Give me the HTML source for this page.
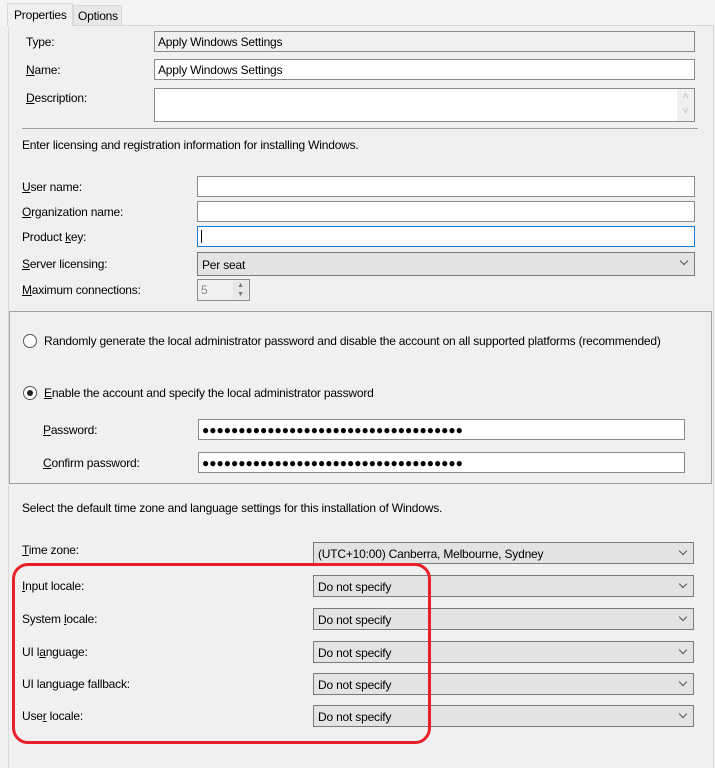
<!DOCTYPE html>
<html><head><meta charset="utf-8"><style>
*{box-sizing:border-box;margin:0;padding:0}
body{width:715px;height:768px;background:#f0f0f0;position:relative;overflow:hidden;font-family:"Liberation Sans",sans-serif;font-size:12px;letter-spacing:-0.2px;color:#000}
.a{position:absolute;white-space:nowrap}
.f{position:absolute;border:1px solid #8a8a8a;background:#fff;height:21px;padding:3px 3px;white-space:nowrap}
.g{background:#f0f0f0}
.c{position:absolute;border:1px solid #7a7a7a;background:#e3e3e3;height:22px;padding:4px 4px;white-space:nowrap}
.c::after{content:"";position:absolute;right:7px;top:5px;width:5px;height:5px;border-right:1.3px solid #555;border-bottom:1.3px solid #555;transform:rotate(45deg)}
.l{position:absolute;white-space:nowrap}
u{text-decoration:underline}
.dots{letter-spacing:0;font-size:12px;line-height:13px}
</style></head><body>
<div class="a" style="left:0;top:0;width:715px;height:25px;background:#f4f4f4"></div>
<div class="a" style="left:8px;top:25px;width:706px;height:743px;border:1px solid #d9d9d9;border-bottom:none;background:#f0f0f0"></div>
<div class="a" style="left:7px;top:3px;width:66px;height:23px;background:#f0f0f0;border:1px solid #d9d9d9;border-bottom:none;padding:4px 0 0 6px">Properties</div>
<div class="a" style="left:73px;top:5px;width:49px;height:20px;background:#e8e8e8;border:1px solid #d9d9d9;border-bottom:none;padding:3px 0 0 4px">Options</div>

<div class="l" style="left:26px;top:35px">Type:</div>
<div class="f g" style="left:154px;top:31px;width:541px">Apply Windows Settings</div>
<div class="l" style="left:26px;top:63px"><u>N</u>ame:</div>
<div class="f" style="left:154px;top:59px;width:541px">Apply Windows Settings</div>
<div class="l" style="left:26px;top:91px"><u>D</u>escription:</div>
<div class="f" style="left:154px;top:88px;width:541px;height:34px"><span style="position:absolute;right:0;top:0;width:17px;height:32px;background:#f0f0f0;color:#bbb;font-size:10px;text-align:center;line-height:15px">˄<br>˅</span></div>
<div class="a" style="left:22px;top:128px;width:676px;height:1px;background:#a0a0a0"></div>
<div class="l" style="left:22px;top:138px">Enter licensing and registration information for installing Windows.</div>

<div class="l" style="left:22px;top:180px"><u>U</u>ser name:</div>
<div class="f" style="left:197px;top:176px;width:498px"></div>
<div class="l" style="left:22px;top:205px"><u>O</u>rganization name:</div>
<div class="f" style="left:197px;top:201px;width:498px"></div>
<div class="l" style="left:22px;top:230px">Product <u>k</u>ey:</div>
<div class="f" style="left:197px;top:226px;width:498px;border-color:#1a7ad4"><span style="display:inline-block;width:1px;height:13px;background:#000"></span></div>
<div class="l" style="left:22px;top:257px"><u>S</u>erver licensing:</div>
<div class="c" style="left:197px;top:252px;width:498px;height:24px;padding-top:5px">Per seat</div>
<div class="l" style="left:22px;top:283px"><u>M</u>aximum connections:</div>
<div class="f" style="left:197px;top:279px;width:53px;height:22px;background:#f0f0f0;color:#888">5<span style="position:absolute;right:1px;top:1px;width:15px;height:18px;background:#e8e8e8;color:#777;font-size:7px;text-align:center;line-height:9px">▲<br>▼</span></div>

<div class="a" style="left:9px;top:311px;width:703px;height:173px;border:1px solid #a0a0a0"></div>
<div class="a" style="left:23px;top:334px;width:14px;height:14px;border:1px solid #555;border-radius:50%;background:#fff"></div>
<div class="l" style="left:44px;top:334px">Randomly generate the local administrator password and disable the account on all supported platforms (recommended)</div>
<div class="a" style="left:23px;top:386px;width:14px;height:14px;border:1px solid #555;border-radius:50%;background:#fff"><div style="position:absolute;left:3px;top:3px;width:6px;height:6px;border-radius:50%;background:#222"></div></div>
<div class="l" style="left:44px;top:386px"><u>E</u>nable the account and specify the local administrator password</div>
<div class="l" style="left:43px;top:423px"><u>P</u>assword:</div>
<div class="f dots" style="left:198px;top:419px;width:487px;padding-top:4px">●●●●●●●●●●●●●●●●●●●●●●●●●●●●●●●●●●●●</div>
<div class="l" style="left:43px;top:456px"><u>C</u>onfirm password:</div>
<div class="f dots" style="left:198px;top:452px;width:487px;padding-top:4px">●●●●●●●●●●●●●●●●●●●●●●●●●●●●●●●●●●●●</div>

<div class="l" style="left:22px;top:501px">Select the default time zone and language settings for this installation of Windows.</div>
<div class="l" style="left:22px;top:543px"><u>T</u>ime zone:</div>
<div class="c" style="left:313px;top:542px;width:381px">(UTC+10:00) Canberra, Melbourne, Sydney</div>
<div class="l" style="left:22px;top:579px"><u>I</u>nput locale:</div>
<div class="c" style="left:313px;top:575px;width:381px">Do not specify</div>
<div class="l" style="left:22px;top:612px">System <u>l</u>ocale:</div>
<div class="c" style="left:313px;top:608px;width:381px">Do not specify</div>
<div class="l" style="left:22px;top:645px">UI l<u>a</u>nguage:</div>
<div class="c" style="left:313px;top:641px;width:381px">Do not specify</div>
<div class="l" style="left:22px;top:677px">UI language fallback:</div>
<div class="c" style="left:313px;top:673px;width:381px">Do not specify</div>
<div class="l" style="left:22px;top:709px">Use<u>r</u> locale:</div>
<div class="c" style="left:313px;top:705px;width:381px">Do not specify</div>

<div class="a" style="left:12px;top:563px;width:419px;height:181px;border:3px solid #e8202a;border-radius:16px"></div>
</body></html>
